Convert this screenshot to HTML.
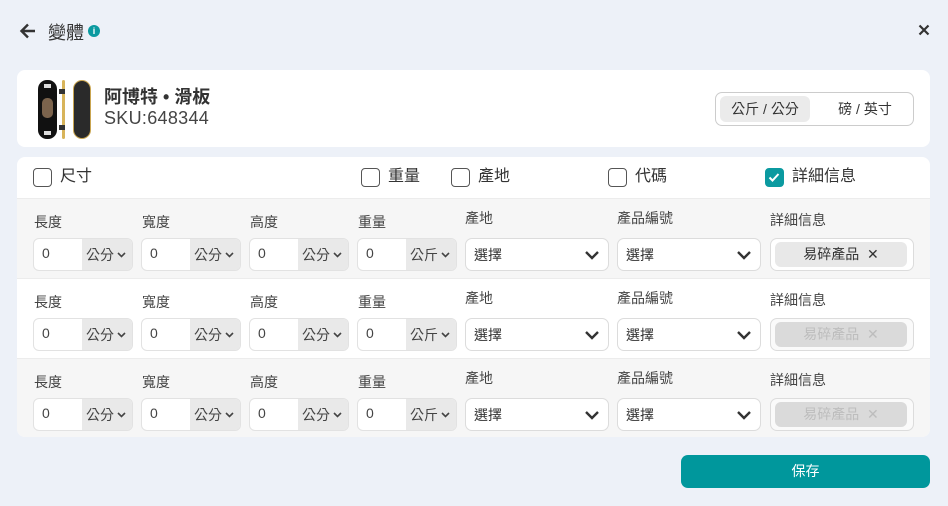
<!DOCTYPE html>
<html><head><meta charset="utf-8"><style>
*{box-sizing:border-box;margin:0;padding:0}
body{width:948px;height:506px;background:#edf1f8;font-family:"Liberation Sans","Noto Sans CJK TC",sans-serif;color:#333;position:relative;overflow:hidden}
.a{position:absolute}
.card{background:#fff;border-radius:8px}
.cb{position:absolute;width:19px;height:19px;border:1.3px solid #555;border-radius:4px;background:#fff}
.cl{position:absolute;font-size:16px;color:#333;line-height:20px}
.row{position:absolute;left:17px;width:913px;height:80px}
.lbl{position:absolute;font-size:14px;color:#444;top:14px;line-height:18px}
.inp{position:absolute;top:39px;width:100px;height:33px;border:1px solid #e2e2e2;border-radius:6px;overflow:hidden;background:#fff}
.inp .v{position:absolute;left:8px;top:6px;font-size:14px;color:#444}
.inp .u{position:absolute;left:48px;top:0;width:52px;height:33px;background:#e9e9e9;font-size:14px;color:#444;padding:6px 0 0 4px}
.inp .u svg{position:absolute;left:35px;top:13px}
.sel{position:absolute;top:39px;width:144px;height:33px;border:1px solid #dcdcdc;border-radius:7px;background:#fff}
.sel .t{position:absolute;left:8px;top:6px;font-size:14px;color:#333}
.sel svg{position:absolute;right:8px;top:10px}
.det{position:absolute;top:39px;left:753px;width:144px;height:33px;border:1px solid #dcdcdc;border-radius:7px;background:#fff}
.tag{position:absolute;left:4px;top:3px;width:132px;height:25px;border-radius:6px;background:#e8e8e8;font-size:14px;color:#333;text-align:center;line-height:25px}
.dis .tag{background:#dadada;color:#bdbdbd}
.dis{background:#fafafa}
</style></head><body>
<svg class="a" style="left:19px;top:22px" width="18" height="18" viewBox="0 0 18 18"><path d="M16 9H3M9 2.5L2.5 9 9 15.5" stroke="#333" stroke-width="2.4" fill="none"/></svg>
<div class="a" style="left:48px;top:19px;font-size:18px;color:#333">變體</div>
<div class="a" style="left:88px;top:25px;width:12px;height:12px;border-radius:50%;background:#0b9aa0;color:#fff;font-size:9px;font-weight:bold;text-align:center;line-height:12px">i</div>
<svg class="a" style="left:918px;top:24px" width="12" height="12" viewBox="0 0 12 12"><path d="M1.5 1.5L10.5 10.5M10.5 1.5L1.5 10.5" stroke="#333" stroke-width="2.2"/></svg>

<div class="a card" style="left:17px;top:70px;width:913px;height:77px"></div>
<div class="a" style="left:38px;top:80px;width:19px;height:59px;background:#111;border-radius:9px"></div>
<div class="a" style="left:42px;top:98px;width:11px;height:20px;background:#a86;border-radius:5px;opacity:.7"></div>
<div class="a" style="left:44px;top:84px;width:7px;height:4px;background:#ddd"></div>
<div class="a" style="left:44px;top:131px;width:7px;height:4px;background:#ddd"></div>
<div class="a" style="left:62px;top:80px;width:3px;height:59px;background:#d8b45a;border-radius:2px"></div>
<div class="a" style="left:59px;top:89px;width:6px;height:5px;background:#333"></div>
<div class="a" style="left:59px;top:125px;width:6px;height:5px;background:#333"></div>
<div class="a" style="left:73px;top:80px;width:18px;height:59px;background:#2a2a2a;border-radius:9px;border:1px solid #c9a550"></div>
<div class="a" style="left:104px;top:83px;font-size:18px;font-weight:bold;color:#333">阿博特 • 滑板</div>
<div class="a" style="left:104px;top:108px;font-size:18px;color:#444;letter-spacing:0.3px">SKU:648344</div>
<div class="a" style="left:715px;top:92px;width:199px;height:34px;border:1px solid #ccc;border-radius:7px;background:#fff"></div>
<div class="a" style="left:720px;top:96px;width:90px;height:26px;border-radius:6px;background:#ebebeb;font-size:14px;text-align:center;line-height:26px;color:#333">公斤 / 公分</div>
<div class="a" style="left:820px;top:96px;width:90px;height:26px;font-size:14px;text-align:center;line-height:26px;color:#333">磅 / 英寸</div>

<div class="a card" style="left:17px;top:157px;width:913px;height:280px;overflow:hidden"></div>
<div class="cb" style="left:33px;top:168px"></div><div class="cl" style="left:60px;top:167px">尺寸</div>
<div class="cb" style="left:361px;top:168px"></div><div class="cl" style="left:388px;top:167px">重量</div>
<div class="cb" style="left:451px;top:168px"></div><div class="cl" style="left:478px;top:167px">產地</div>
<div class="cb" style="left:608px;top:168px"></div><div class="cl" style="left:635px;top:167px">代碼</div>
<div class="cb" style="left:765px;top:168px;background:#0b9aa0;border-color:#0b9aa0"><svg width="16" height="16" viewBox="0 0 16 16" style="position:absolute;left:0;top:0"><path d="M3.5 8.5L6.5 11.5 12.5 5" stroke="#fff" stroke-width="2" fill="none"/></svg></div><div class="cl" style="left:792px;top:167px">詳細信息</div>

<div class="row" style="top:198px;background:#f6f6f6;border-top:1px solid #ececec">
<div class="lbl" style="left:17px">長度</div><div class="lbl" style="left:125px">寬度</div><div class="lbl" style="left:233px">高度</div><div class="lbl" style="left:341px">重量</div><div class="lbl" style="left:448px;top:10px">產地</div><div class="lbl" style="left:600px;top:10px">產品編號</div><div class="lbl" style="left:753px;top:12px">詳細信息</div>
<div class="inp" style="left:16px"><span class="v">0</span><span class="u">公分<svg width="9" height="6" viewBox="0 0 9 6"><path d="M1 1L4.5 4.5 8 1" stroke="#444" stroke-width="1.6" fill="none"/></svg></span></div>
<div class="inp" style="left:124px"><span class="v">0</span><span class="u">公分<svg width="9" height="6" viewBox="0 0 9 6"><path d="M1 1L4.5 4.5 8 1" stroke="#444" stroke-width="1.6" fill="none"/></svg></span></div>
<div class="inp" style="left:232px"><span class="v">0</span><span class="u">公分<svg width="9" height="6" viewBox="0 0 9 6"><path d="M1 1L4.5 4.5 8 1" stroke="#444" stroke-width="1.6" fill="none"/></svg></span></div>
<div class="inp" style="left:340px"><span class="v">0</span><span class="u">公斤<svg width="9" height="6" viewBox="0 0 9 6"><path d="M1 1L4.5 4.5 8 1" stroke="#444" stroke-width="1.6" fill="none"/></svg></span></div>
<div class="sel" style="left:448px"><span class="t">選擇</span><svg width="16" height="12" viewBox="0 0 16 12"><path d="M2 3L8 9 14 3" stroke="#333" stroke-width="2.4" fill="none"/></svg></div>
<div class="sel" style="left:600px"><span class="t">選擇</span><svg width="16" height="12" viewBox="0 0 16 12"><path d="M2 3L8 9 14 3" stroke="#333" stroke-width="2.4" fill="none"/></svg></div>
<div class="det"><div class="tag">易碎產品 &nbsp;✕</div></div>
</div>

<div class="row" style="top:278px;background:#fff;border-top:1px solid #ececec">
<div class="lbl" style="left:17px">長度</div><div class="lbl" style="left:125px">寬度</div><div class="lbl" style="left:233px">高度</div><div class="lbl" style="left:341px">重量</div><div class="lbl" style="left:448px;top:10px">產地</div><div class="lbl" style="left:600px;top:10px">產品編號</div><div class="lbl" style="left:753px;top:12px">詳細信息</div>
<div class="inp" style="left:16px"><span class="v">0</span><span class="u">公分<svg width="9" height="6" viewBox="0 0 9 6"><path d="M1 1L4.5 4.5 8 1" stroke="#444" stroke-width="1.6" fill="none"/></svg></span></div>
<div class="inp" style="left:124px"><span class="v">0</span><span class="u">公分<svg width="9" height="6" viewBox="0 0 9 6"><path d="M1 1L4.5 4.5 8 1" stroke="#444" stroke-width="1.6" fill="none"/></svg></span></div>
<div class="inp" style="left:232px"><span class="v">0</span><span class="u">公分<svg width="9" height="6" viewBox="0 0 9 6"><path d="M1 1L4.5 4.5 8 1" stroke="#444" stroke-width="1.6" fill="none"/></svg></span></div>
<div class="inp" style="left:340px"><span class="v">0</span><span class="u">公斤<svg width="9" height="6" viewBox="0 0 9 6"><path d="M1 1L4.5 4.5 8 1" stroke="#444" stroke-width="1.6" fill="none"/></svg></span></div>
<div class="sel" style="left:448px"><span class="t">選擇</span><svg width="16" height="12" viewBox="0 0 16 12"><path d="M2 3L8 9 14 3" stroke="#333" stroke-width="2.4" fill="none"/></svg></div>
<div class="sel" style="left:600px"><span class="t">選擇</span><svg width="16" height="12" viewBox="0 0 16 12"><path d="M2 3L8 9 14 3" stroke="#333" stroke-width="2.4" fill="none"/></svg></div>
<div class="det dis"><div class="tag">易碎產品 &nbsp;✕</div></div>
</div>

<div class="row" style="top:358px;height:79px;background:#f6f6f6;border-top:1px solid #ececec;border-radius:0 0 8px 8px">
<div class="lbl" style="left:17px">長度</div><div class="lbl" style="left:125px">寬度</div><div class="lbl" style="left:233px">高度</div><div class="lbl" style="left:341px">重量</div><div class="lbl" style="left:448px;top:10px">產地</div><div class="lbl" style="left:600px;top:10px">產品編號</div><div class="lbl" style="left:753px;top:12px">詳細信息</div>
<div class="inp" style="left:16px"><span class="v">0</span><span class="u">公分<svg width="9" height="6" viewBox="0 0 9 6"><path d="M1 1L4.5 4.5 8 1" stroke="#444" stroke-width="1.6" fill="none"/></svg></span></div>
<div class="inp" style="left:124px"><span class="v">0</span><span class="u">公分<svg width="9" height="6" viewBox="0 0 9 6"><path d="M1 1L4.5 4.5 8 1" stroke="#444" stroke-width="1.6" fill="none"/></svg></span></div>
<div class="inp" style="left:232px"><span class="v">0</span><span class="u">公分<svg width="9" height="6" viewBox="0 0 9 6"><path d="M1 1L4.5 4.5 8 1" stroke="#444" stroke-width="1.6" fill="none"/></svg></span></div>
<div class="inp" style="left:340px"><span class="v">0</span><span class="u">公斤<svg width="9" height="6" viewBox="0 0 9 6"><path d="M1 1L4.5 4.5 8 1" stroke="#444" stroke-width="1.6" fill="none"/></svg></span></div>
<div class="sel" style="left:448px"><span class="t">選擇</span><svg width="16" height="12" viewBox="0 0 16 12"><path d="M2 3L8 9 14 3" stroke="#333" stroke-width="2.4" fill="none"/></svg></div>
<div class="sel" style="left:600px"><span class="t">選擇</span><svg width="16" height="12" viewBox="0 0 16 12"><path d="M2 3L8 9 14 3" stroke="#333" stroke-width="2.4" fill="none"/></svg></div>
<div class="det dis"><div class="tag">易碎產品 &nbsp;✕</div></div>
</div>

<div class="a" style="left:681px;top:455px;width:249px;height:33px;border-radius:7px;background:#00979c;color:#fff;font-size:14px;text-align:center;line-height:33px">保存</div>
</body></html>
